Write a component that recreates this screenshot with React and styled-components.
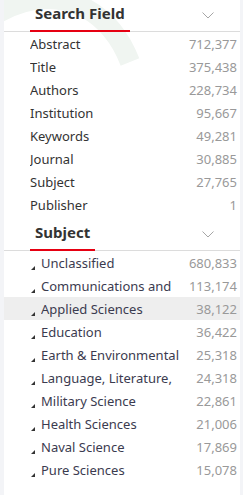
import React from 'react';
import styled, { createGlobalStyle } from 'styled-components';

const GlobalStyle = createGlobalStyle`
  html, body {
    margin: 0;
    padding: 0;
    background: #f3f4f7;
    font-family: "Noto Sans", "Liberation Sans", sans-serif;
  }
`;

const Page = styled.div`
  width: 243px;
  height: 495px;
  overflow: hidden;
  box-sizing: border-box;
  padding: 0 3px 0 4px;
`;

const Panel = styled.div`
  position: relative;
  background: #fff;
  height: 100%;
  overflow: hidden;
`;

const Scroller = styled.div`
  margin-top: -3px;
`;

const Watermark = styled.svg`
  position: absolute;
  left: -4px;
  top: 0;
  pointer-events: none;
`;

const Section = styled.div`
  position: relative;
`;

const Header = styled.div`
  display: flex;
  align-items: flex-end;
  justify-content: space-between;
  height: 35px;
  border-bottom: 1px solid #dcdcdc;
  box-sizing: border-box;
  padding: 0 26px 0 26px;
`;

const Title = styled.span`
  display: flex;
  align-items: center;
  height: 100%;
  box-sizing: border-box;
  padding: 0 5px 2px;
  font-size: 15px;
  font-weight: 700;
  color: #333;
  border-bottom: 2px solid #e60012;
  margin-bottom: -1px;
`;

const Chevron = styled.svg`
  align-self: center;
  margin-top: 3px;
`;

const List = styled.ul`
  list-style: none;
  margin: 0;
  padding: 0;
`;

const Row = styled.li`
  display: flex;
  align-items: center;
  height: 23px;
  padding: 0 3px 0 ${props => (props.tree ? 27 : 26)}px;
  background: ${props => (props.active ? '#eeeeee' : 'transparent')};
  font-size: 13px;
`;

const Caret = styled.span`
  width: 0;
  height: 0;
  border-left: 4px solid transparent;
  border-bottom: 4px solid #333;
  align-self: flex-end;
  margin: 0 6px 4px 0;
`;

const Label = styled.span`
  flex: 1;
  color: ${props => (props.tree ? '#3b3b4f' : '#333')};
  white-space: nowrap;
  overflow: hidden;
`;

const Count = styled.span`
  color: #999;
`;

const fields = [
  ['Abstract', '712,377'],
  ['Title', '375,438'],
  ['Authors', '228,734'],
  ['Institution', '95,667'],
  ['Keywords', '49,281'],
  ['Journal', '30,885'],
  ['Subject', '27,765'],
  ['Publisher', '1'],
];

const subjects = [
  ['Unclassified', '680,833'],
  ['Communications and', '113,174'],
  ['Applied Sciences', '38,122'],
  ['Education', '36,422'],
  ['Earth & Environmental', '25,318'],
  ['Language, Literature,', '24,318'],
  ['Military Science', '22,861'],
  ['Health Sciences', '21,006'],
  ['Naval Science', '17,869'],
  ['Pure Sciences', '15,078'],
  ['', ''],
];

function Down() {
  return (
    <Chevron width="12" height="7" viewBox="0 0 12 7">
      <path d="M0.5 0.5 L6 6 L11.5 0.5" fill="none" stroke="#a6a6a6" strokeWidth="1" />
    </Chevron>
  );
}

export default function App() {
  return (
    <>
      <GlobalStyle />
      <Page>
        <Panel>
          <Watermark width="160" height="70" viewBox="0 0 160 70">
            <path d="M-10 18 Q40 -14 85 8 Q115 24 130 62" fill="none" stroke="#f0f5f1" strokeWidth="20" />
          </Watermark>
          <Scroller>
            <Section>
              <Header>
                <Title>Search Field</Title>
                <Down />
              </Header>
              <List>
                {fields.map(([name, n]) => (
                  <Row key={name}>
                    <Label>{name}</Label>
                    <Count>{n}</Count>
                  </Row>
                ))}
              </List>
            </Section>
            <Section>
              <Header>
                <Title>Subject</Title>
                <Down />
              </Header>
              <List>
                {subjects.map(([name, n], i) => (
                  <Row key={i} tree active={name === 'Applied Sciences'}>
                    <Caret />
                    <Label tree>{name}</Label>
                    <Count>{n}</Count>
                  </Row>
                ))}
              </List>
            </Section>
          </Scroller>
        </Panel>
      </Page>
    </>
  );
}
